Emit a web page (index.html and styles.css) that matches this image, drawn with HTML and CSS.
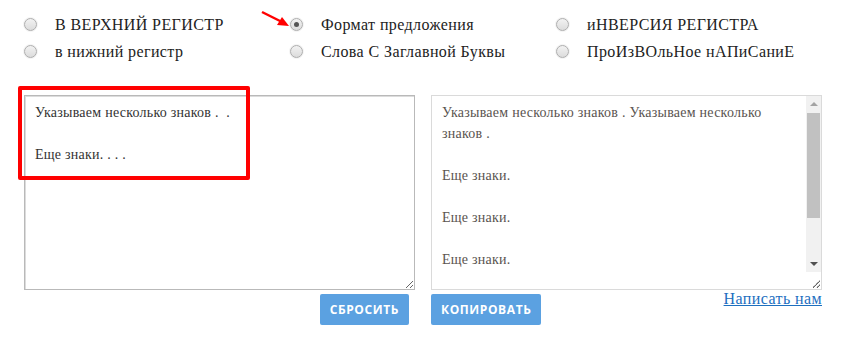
FILE: index.html
```html
<!DOCTYPE html>
<html lang="ru">
<head>
<meta charset="utf-8">
<title>Регистр</title>
<link rel="stylesheet" href="styles.css">
</head>
<body>
<div class="page">
  <div class="options">
    <label class="opt"><input type="radio" name="mode" class="radio"><span>В ВЕРХНИЙ РЕГИСТР</span></label>
    <label class="opt"><input type="radio" name="mode" class="radio" checked><span>Формат предложения</span></label>
    <label class="opt"><input type="radio" name="mode" class="radio"><span>иНВЕРСИЯ РЕГИСТРА</span></label>
    <label class="opt"><input type="radio" name="mode" class="radio"><span>в нижний регистр</span></label>
    <label class="opt"><input type="radio" name="mode" class="radio"><span>Слова С Заглавной Буквы</span></label>
    <label class="opt"><input type="radio" name="mode" class="radio"><span>ПроИзВОльНое нАПиСаниЕ</span></label>
  </div>
  <div class="editors">
    <textarea class="box box-in">Указываем несколько знаков .  .

Еще знаки. . . .</textarea>
    <div class="out-wrap">
      <textarea class="box box-out" readonly>Указываем несколько знаков . Указываем несколько знаков .

Еще знаки.

Еще знаки.

Еще знаки.

Еще знаки.
</textarea>
      <div class="sb">
        <div class="sb-btn"><span class="tri-up"></span></div>
        <div class="sb-thumb"></div>
        <div class="sb-space"></div>
        <div class="sb-btn"><span class="tri-down"></span></div>
      </div>
      <svg class="grip" width="9" height="9" viewBox="0 0 9 9"><path d="M8.5 1.5 L1.5 8.5 M8.5 5.5 L5.5 8.5" stroke="#777" stroke-width="1" stroke-dasharray="1 1"/></svg>
    </div>
  </div>
  <div class="actions">
    <div class="act-left"><button class="btn">СБРОСИТЬ</button></div>
    <div class="act-right"><button class="btn">КОПИРОВАТЬ</button><a class="mail" href="#">Написать нам</a></div>
  </div>
  <div class="highlight"></div>
  <svg class="arrow" width="34" height="20" viewBox="0 0 34 20"><line x1="2" y1="2" x2="22" y2="12" stroke="#f00" stroke-width="2.5"/><polygon points="29,16 17,15 22,7" fill="#f00"/></svg>
</div>
</body>
</html>
```
FILE: styles.css
```css
html, body { margin: 0; padding: 0; background: #fff; }
.page {
  position: relative;
  width: 798px;
  padding: 11px 0 0 24px;
  font-family: "Liberation Serif", "DejaVu Serif", serif;
  color: #222;
}
.options {
  display: grid;
  grid-template-columns: 266px 266px 266px;
  grid-auto-rows: 27px;
}
.opt {
  display: flex;
  align-items: center;
  font-size: 16px;
  letter-spacing: 0.4px;
  cursor: pointer;
}
.radio {
  -webkit-appearance: none;
  appearance: none;
  margin: 0;
  width: 13px;
  height: 13px;
  border-radius: 50%;
  border: 1px solid #adadad;
  background: linear-gradient(#f2f2f2, #dcdcdc);
  box-shadow: 0 0 0 1px #f4f4f4;
  position: relative;
  flex: none;
}
.radio + span { margin-left: 18px; }
.radio:checked::after {
  content: "";
  position: absolute;
  left: 3px;
  top: 3px;
  width: 5px;
  height: 5px;
  border-radius: 50%;
  background: #555;
}
.editors {
  margin-top: 30px;
  display: grid;
  grid-template-columns: 391px 391px;
  column-gap: 16px;
}
.box {
  box-sizing: border-box;
  height: 195px;
  width: 100%;
  margin: 0;
  padding: 6px 10px;
  font-family: "Liberation Serif", "DejaVu Serif", serif;
  font-size: 14px;
  letter-spacing: 0.25px;
  line-height: 21px;
  resize: both;
  outline: none;
  display: block;
}
.box-in {
  border: 1px solid #b9b9b9;
  box-shadow: inset 1px 1px 0 #dcdcdc;
  color: #333;
}
.out-wrap { position: relative; }
.box-out {
  border: 1px solid #dadada;
  color: #5a5450;
  overflow: hidden;
  padding-right: 25px;
}
.sb {
  position: absolute;
  right: 1px;
  top: 1px;
  bottom: 18px;
  width: 15px;
  background: #f1f1f1;
  display: flex;
  flex-direction: column;
}
.sb-btn {
  height: 16px;
  flex: none;
  display: flex;
  align-items: center;
  justify-content: center;
}
.tri-up {
  width: 0; height: 0;
  border-left: 4px solid transparent;
  border-right: 4px solid transparent;
  border-bottom: 4px solid #a3a3a3;
}
.tri-down {
  width: 0; height: 0;
  border-left: 4px solid transparent;
  border-right: 4px solid transparent;
  border-top: 4px solid #505050;
}
.sb-thumb {
  flex: none;
  height: 105px;
  margin: 1px 1px 0;
  background: #c1c1c1;
}
.sb-space { flex: 1; }
.grip {
  position: absolute;
  right: 2px;
  bottom: 2px;
}
.actions {
  display: grid;
  grid-template-columns: 391px 391px;
  column-gap: 16px;
  margin-top: 4px;
}
.act-left { display: flex; justify-content: flex-end; padding-right: 6px; }
.act-right { display: flex; justify-content: space-between; align-items: flex-start; }
.btn {
  height: 31px;
  padding: 0 10px;
  border: 0;
  border-radius: 2px;
  background: #5ba1e1;
  color: #fff;
  font-family: "Open Sans", "Liberation Sans", sans-serif;
  font-weight: 700;
  font-size: 12px;
  letter-spacing: 0.6px;
  cursor: pointer;
}
.mail {
  font-size: 16px;
  letter-spacing: 0.4px;
  color: #1d6fbf;
  text-decoration: underline;
  margin-top: -4px;
}
.highlight {
  position: absolute;
  left: 18px;
  top: 86px;
  width: 232px;
  height: 94px;
  box-sizing: border-box;
  border: 4px solid #f00;
  border-radius: 2px;
}
.arrow {
  position: absolute;
  left: 260px;
  top: 10px;
}
```
